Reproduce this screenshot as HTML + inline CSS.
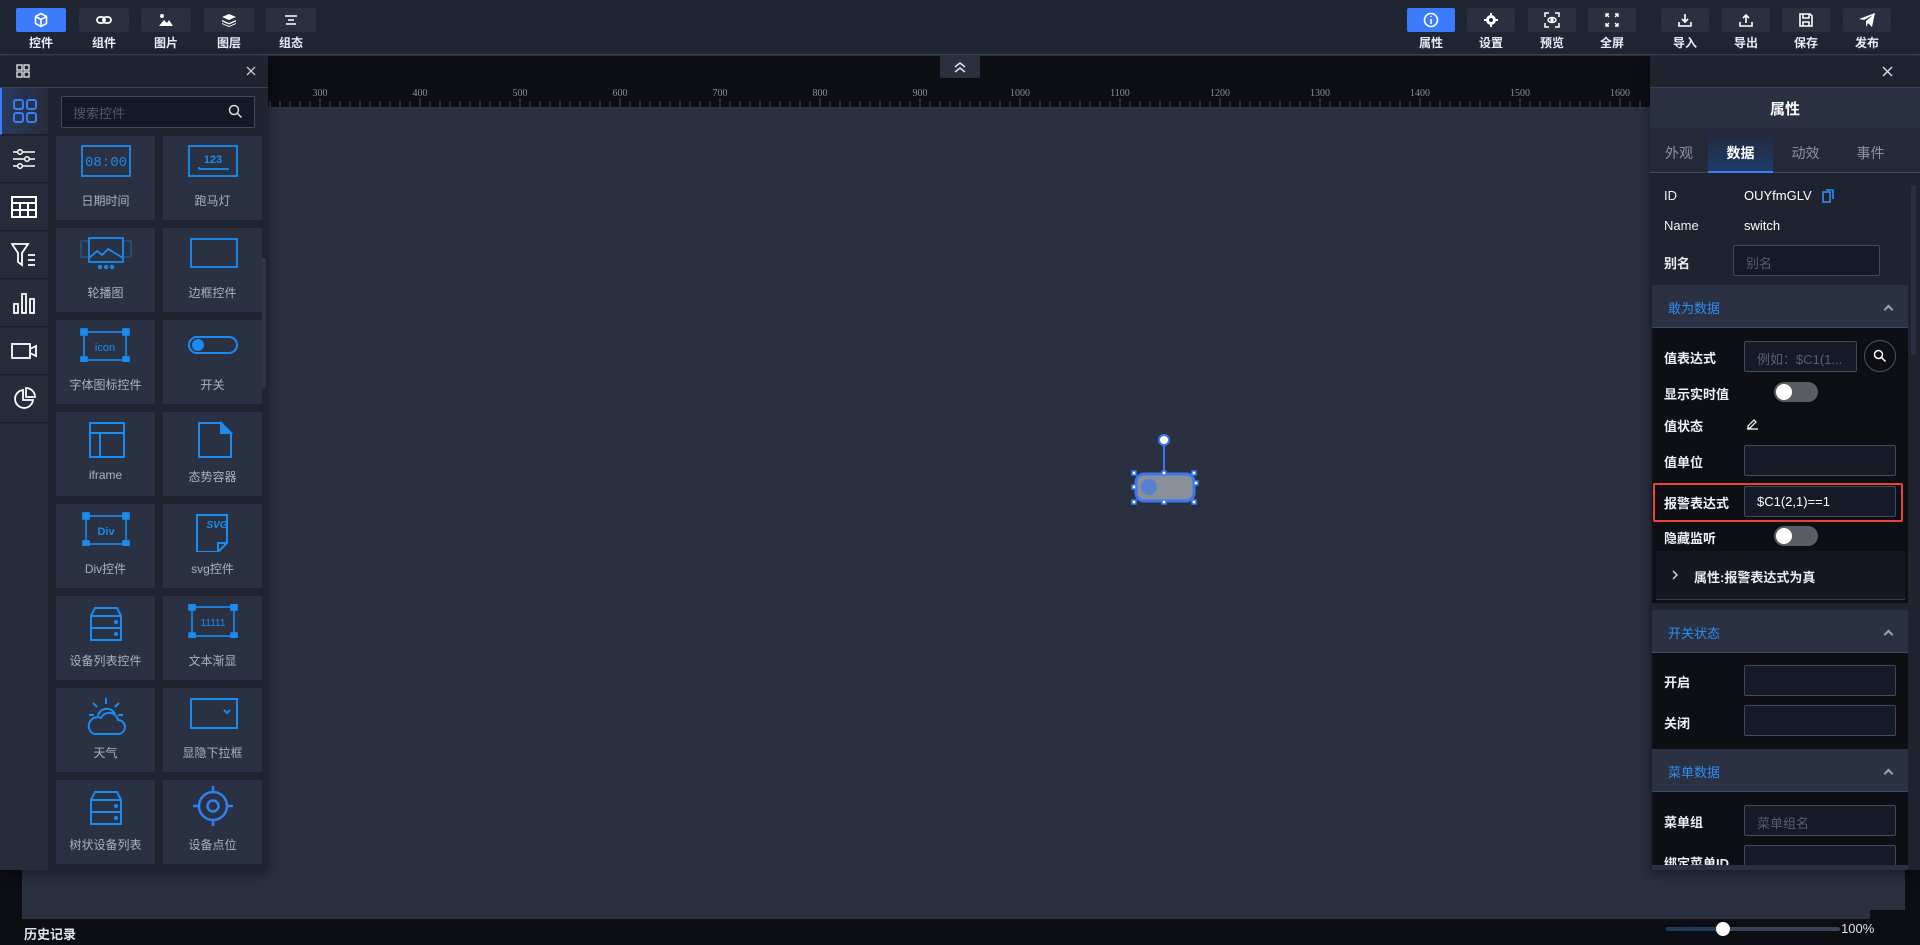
<!DOCTYPE html>
<html><head><meta charset="utf-8"><style>
*{margin:0;padding:0;box-sizing:border-box}
body{width:1920px;height:945px;overflow:hidden;background:#2a3040;font-family:"Liberation Sans","Noto Sans CJK SC",sans-serif;color:#fff;position:relative}
.a{position:absolute}
.top{left:0;top:0;width:1920px;height:55px;background:#1f2533;border-bottom:1px solid #3a4256}
.tb{position:absolute;top:8px;width:50px;height:24px;background:#2a3040;border-radius:2px;display:flex;align-items:center;justify-content:center}
.tb.on{background:#3d7bfd}
.tl{position:absolute;top:34px;width:50px;text-align:center;font-size:12px;font-weight:bold;color:#e8ecf4}
.cell{position:absolute;width:99px;height:84px;background:#2a3142}
.cell .lb{position:absolute;top:56px;width:100%;text-align:center;font-size:12px;color:#a9b2c4}
.cell svg{position:absolute;left:24px;top:8px}
.side{position:absolute;left:0;width:48px;height:47px;background:#262c3a;border-bottom:1px solid #1b1f29;display:flex;align-items:center;justify-content:center}
.lab{position:absolute;left:1664px;font-size:13px;font-weight:bold;color:#eef1f6}
.inp{position:absolute;left:1744px;width:152px;height:31px;background:#151a26;border:1px solid #3e4860;border-radius:2px;font-size:13px;color:#555e72;padding:7px 12px}
.sec{position:absolute;left:1652px;width:256px;background:#2a3142;border-bottom:1px solid #3e4a66}
.sec span{position:absolute;left:16px;font-size:13px;color:#2f8cf0}
.sec i{position:absolute;right:16px;top:50%;width:7px;height:7px;border-left:2px solid #9aa3b5;border-top:2px solid #9aa3b5;transform:rotate(45deg)}
.dark{position:absolute;left:1652px;width:256px;background:#0d0f15}
.tog{position:absolute;left:1774px;width:44px;height:20px;border-radius:10px;background:#5a5d64}
.tog:after{content:"";position:absolute;left:2px;top:2px;width:16px;height:16px;border-radius:50%;background:#fff}
</style></head><body>
<div class="a top"></div>
<div class="tb on" style="left:16px"><svg width="16" height="16" viewBox="0 0 16 16" fill="none" stroke="#fff" stroke-width="1.6"><path d="M8 1.5l5.5 3v7L8 14.5 2.5 11.5v-7z M2.5 4.5L8 7.5l5.5-3 M8 7.5v7"/></svg></div><div class="tl" style="left:16px">控件</div>
<div class="tb" style="left:79px"><svg width="16" height="10" viewBox="0 0 16 10" fill="none" stroke="#fff" stroke-width="1.8"><rect x="1" y="2" width="8" height="6" rx="3"/><rect x="7" y="2" width="8" height="6" rx="3"/></svg></div><div class="tl" style="left:79px">组件</div>
<div class="tb" style="left:141px"><svg width="16" height="14" viewBox="0 0 16 14" fill="#fff"><circle cx="4" cy="3" r="2"/><path d="M1 13l5-6 3 3 2-3 4 6z"/></svg></div><div class="tl" style="left:141px">图片</div>
<div class="tb" style="left:204px"><svg width="16" height="14" viewBox="0 0 16 14" fill="#fff"><path d="M8 1l7 3-7 3-7-3z"/><path d="M1 7l7 3 7-3v1.5l-7 3-7-3z"/><path d="M1 10l7 3 7-3v1l-7 3-7-3z"/></svg></div><div class="tl" style="left:204px">图层</div>
<div class="tb" style="left:266px"><svg width="14" height="10" viewBox="0 0 14 10" stroke="#fff" stroke-width="1.5"><path d="M1 1h12M4 5h6M2 9h10"/></svg></div><div class="tl" style="left:266px">组态</div>

<div class="tb on" style="left:1407px;width:48px"><svg width="16" height="16" viewBox="0 0 16 16" fill="none" stroke="#fff" stroke-width="1.6"><circle cx="8" cy="8" r="6.5"/><path d="M8 7v5M8 4v1" /></svg></div><div class="tl" style="left:1406px">属性</div>
<div class="tb" style="left:1467px;width:48px"><svg width="14" height="14" viewBox="0 0 14 14" fill="#fff"><circle cx="7" cy="7" r="5"/><circle cx="7" cy="7" r="2" fill="#2a3040"/><path d="M6 0h2v3H6zM6 11h2v3H6zM0 6h3v2H0zM11 6h3v2h-3z"/></svg></div><div class="tl" style="left:1466px">设置</div>
<div class="tb" style="left:1528px;width:48px"><svg width="16" height="16" viewBox="0 0 16 16" fill="none" stroke="#fff" stroke-width="1.5"><path d="M1 5V1h4M11 1h4v4M15 11v4h-4M5 15H1v-4"/><ellipse cx="8" cy="8" rx="4" ry="2.5"/><circle cx="8" cy="8" r="1" fill="#fff"/></svg></div><div class="tl" style="left:1527px">预览</div>
<div class="tb" style="left:1588px;width:48px"><svg width="14" height="14" viewBox="0 0 14 14" fill="none" stroke="#fff" stroke-width="1.4"><path d="M1 4V1h3M1 1l3 3M10 1h3v3M13 1l-3 3M13 10v3h-3M13 13l-3-3M4 13H1v-3M1 13l3-3"/></svg></div><div class="tl" style="left:1587px">全屏</div>
<div class="tb" style="left:1661px;width:48px"><svg width="14" height="14" viewBox="0 0 14 14" fill="none" stroke="#fff" stroke-width="1.6"><path d="M7 1v8M4 6l3 3 3-3M1 9v4h12V9"/></svg></div><div class="tl" style="left:1660px">导入</div>
<div class="tb" style="left:1722px;width:48px"><svg width="14" height="14" viewBox="0 0 14 14" fill="none" stroke="#fff" stroke-width="1.6"><path d="M7 10V2M4 5l3-3 3 3M1 9v4h12V9"/></svg></div><div class="tl" style="left:1721px">导出</div>
<div class="tb" style="left:1782px;width:48px"><svg width="14" height="14" viewBox="0 0 14 14" fill="none" stroke="#fff" stroke-width="1.6"><path d="M1 1h10l2 2v10H1z M4 1v4h6V1 M4 13V9h6v4"/></svg></div><div class="tl" style="left:1781px">保存</div>
<div class="tb" style="left:1843px;width:48px"><svg width="18" height="16" viewBox="0 0 18 16" fill="#fff"><path d="M1 7L17 1l-3 14-4-4-2 4V9l7-6-9 5z"/></svg></div><div class="tl" style="left:1842px">发布</div>

<div class="a" style="left:268px;top:56px;width:1382px;height:51px;background:#0c0e14"></div>
<svg class="a" style="left:268px;top:56px" width="1382" height="51">
<g font-family="Liberation Serif" font-size="10" fill="#8a8f99">
<text x="52" y="40" text-anchor="middle">300</text><text x="152" y="40" text-anchor="middle">400</text><text x="252" y="40" text-anchor="middle">500</text><text x="352" y="40" text-anchor="middle">600</text><text x="452" y="40" text-anchor="middle">700</text><text x="552" y="40" text-anchor="middle">800</text><text x="652" y="40" text-anchor="middle">900</text><text x="752" y="40" text-anchor="middle">1000</text><text x="852" y="40" text-anchor="middle">1100</text><text x="952" y="40" text-anchor="middle">1200</text><text x="1052" y="40" text-anchor="middle">1300</text><text x="1152" y="40" text-anchor="middle">1400</text><text x="1252" y="40" text-anchor="middle">1500</text><text x="1352" y="40" text-anchor="middle">1600</text></g>
<g stroke="#4a4f5a" stroke-width="1">
<path d="M2 45v6M12 45v6M22 45v6M32 45v6M42 45v6M52 42v9M62 45v6M72 45v6M82 45v6M92 45v6M102 45v6M112 45v6M122 45v6M132 45v6M142 45v6M152 42v9M162 45v6M172 45v6M182 45v6M192 45v6M202 45v6M212 45v6M222 45v6M232 45v6M242 45v6M252 42v9M262 45v6M272 45v6M282 45v6M292 45v6M302 45v6M312 45v6M322 45v6M332 45v6M342 45v6M352 42v9M362 45v6M372 45v6M382 45v6M392 45v6M402 45v6M412 45v6M422 45v6M432 45v6M442 45v6M452 42v9M462 45v6M472 45v6M482 45v6M492 45v6M502 45v6M512 45v6M522 45v6M532 45v6M542 45v6M552 42v9M562 45v6M572 45v6M582 45v6M592 45v6M602 45v6M612 45v6M622 45v6M632 45v6M642 45v6M652 42v9M662 45v6M672 45v6M682 45v6M692 45v6M702 45v6M712 45v6M722 45v6M732 45v6M742 45v6M752 42v9M762 45v6M772 45v6M782 45v6M792 45v6M802 45v6M812 45v6M822 45v6M832 45v6M842 45v6M852 42v9M862 45v6M872 45v6M882 45v6M892 45v6M902 45v6M912 45v6M922 45v6M932 45v6M942 45v6M952 42v9M962 45v6M972 45v6M982 45v6M992 45v6M1002 45v6M1012 45v6M1022 45v6M1032 45v6M1042 45v6M1052 42v9M1062 45v6M1072 45v6M1082 45v6M1092 45v6M1102 45v6M1112 45v6M1122 45v6M1132 45v6M1142 45v6M1152 42v9M1162 45v6M1172 45v6M1182 45v6M1192 45v6M1202 45v6M1212 45v6M1222 45v6M1232 45v6M1242 45v6M1252 42v9M1262 45v6M1272 45v6M1282 45v6M1292 45v6M1302 45v6M1312 45v6M1322 45v6M1332 45v6M1342 45v6M1352 42v9M1362 45v6M1372 45v6"/></g></svg>
<div class="a" style="left:940px;top:56px;width:40px;height:22px;background:#2a3040;display:flex;align-items:center;justify-content:center"><svg width="14" height="12" viewBox="0 0 14 12" fill="none" stroke="#dde" stroke-width="1.5"><path d="M2 6l5-4 5 4M2 11l5-4 5 4"/></svg></div>

<div class="a" style="left:0;top:870px;width:22px;height:75px;background:#0c0e14"></div>
<div class="a" style="left:1905px;top:870px;width:15px;height:50px;background:#0c0e14"></div>
<div class="a" style="left:1870px;top:910px;width:50px;height:10px;background:#0c0e14"></div>
<div class="a" style="left:0;top:919px;width:1920px;height:26px;background:#0c0e14"></div>
<div class="a" style="left:24px;top:924px;font-size:13px;font-weight:bold;color:#e0e3ea">历史记录</div>
<div class="a" style="left:1666px;top:927px;width:174px;height:4px;background:#3a4458;border-radius:2px"></div>
<div class="a" style="left:1666px;top:927px;width:50px;height:4px;background:#1e3a5e;border-radius:2px"></div>
<div class="a" style="left:1716px;top:922px;width:14px;height:14px;border-radius:50%;background:#fff"></div>
<div class="a" style="left:1841px;top:921px;font-size:13px;color:#e0e3ea">100%</div>

<svg class="a" style="left:1125px;top:430px" width="80" height="80">
<line x1="39" y1="16" x2="39" y2="44" stroke="#3b78f0" stroke-width="2"/>
<circle cx="39" cy="10" r="5" fill="#fff" stroke="#3b78f0" stroke-width="2"/>
<rect x="11" y="44" width="58" height="27" rx="8" fill="#8a9099" stroke="#3b78f0" stroke-width="3"/>
<circle cx="24" cy="57" r="8" fill="#5b7fd0"/>
<g fill="#fff" stroke="#3b78f0" stroke-width="1.5"><rect x="7" y="41" width="4" height="4"/><rect x="37" y="41" width="4" height="4"/><rect x="67" y="41" width="4" height="4"/><rect x="7" y="55" width="4" height="4"/><rect x="69" y="51" width="4" height="4"/><rect x="7" y="70" width="4" height="4"/><rect x="37" y="70" width="4" height="4"/><rect x="67" y="70" width="4" height="4"/></g></svg>

<div class="a" style="left:0;top:56px;width:268px;height:814px;background:#1f2430;box-shadow:0 4px 12px rgba(0,0,0,.4)"></div>
<div class="a" style="left:0;top:87px;width:268px;height:1px;background:#3a4256"></div>
<svg class="a" style="left:16px;top:64px" width="14" height="14" fill="none" stroke="#ddd" stroke-width="1.4"><rect x="1" y="1" width="5" height="5"/><rect x="8" y="1" width="5" height="5"/><rect x="1" y="8" width="5" height="5"/><rect x="8" y="8" width="5" height="5"/></svg>
<svg class="a" style="left:246px;top:66px" width="10" height="10" stroke="#ccc" stroke-width="1.3"><path d="M1 1l8 8M9 1l-8 8"/></svg>
<div class="side" style="top:88px;background:linear-gradient(90deg,#2a3a5c,#262c3a);border-left:2px solid #3d7bfd"><svg width="24" height="24" fill="none" stroke="#3d7bfd" stroke-width="2"><rect x="1" y="1" width="9" height="9" rx="2"/><rect x="14" y="1" width="9" height="9" rx="2"/><rect x="1" y="14" width="9" height="9" rx="2"/><rect x="14" y="14" width="9" height="9" rx="2"/></svg></div>
<div class="side" style="top:136px"><svg width="22" height="20" fill="none" stroke="#fff" stroke-width="1.5"><path d="M0 3h22M0 10h22M0 17h22"/><circle cx="7" cy="3" r="2.3" fill="#262c3a"/><circle cx="14" cy="10" r="2.3" fill="#262c3a"/><circle cx="7" cy="17" r="2.3" fill="#262c3a"/></svg></div>
<div class="side" style="top:184px"><svg width="26" height="22" fill="none" stroke="#fff" stroke-width="2"><rect x="1" y="1" width="24" height="20"/><path d="M1 7h24M1 14h24M9 7v14M17 7v14"/></svg></div>
<div class="side" style="top:232px"><svg width="26" height="24" fill="none" stroke="#fff" stroke-width="1.8"><path d="M1 1h16l-6 9v12l-4-3V10z M17 12h7M17 17h7M17 22h7"/></svg></div>
<div class="side" style="top:280px"><svg width="24" height="22" fill="none" stroke="#fff" stroke-width="1.8"><rect x="2" y="12" width="4" height="9"/><rect x="10" y="2" width="4" height="19"/><rect x="18" y="7" width="4" height="14"/></svg></div>
<div class="side" style="top:328px"><svg width="26" height="18" fill="none" stroke="#fff" stroke-width="1.8"><rect x="1" y="2" width="18" height="14"/><path d="M19 7l6-3v10l-6-3"/></svg></div>
<div class="side" style="top:376px"><svg width="24" height="24" fill="none" stroke="#fff" stroke-width="1.8"><path d="M11 3A9 9 0 1 0 21 13H11z M14 1a9 9 0 0 1 9 9h-9z"/></svg></div>
<div class="side" style="top:424px;height:446px;border:none"></div>
<div class="a" style="left:61px;top:96px;width:194px;height:32px;background:#141925;border:1px solid #3e4860;border-radius:2px"></div>
<div class="a" style="left:73px;top:103px;font-size:13px;color:#4e576a">搜索控件</div>
<svg class="a" style="left:228px;top:104px" width="15" height="15" fill="none" stroke="#ddd" stroke-width="1.5"><circle cx="6" cy="6" r="4.5"/><path d="M9.5 9.5l4 4"/></svg>
<div class="a" style="left:262px;top:258px;width:4px;height:130px;background:#2f3646;border-radius:2px"></div>

<div class="cell" style="left:56px;top:136px"><svg width="52" height="34" fill="none" stroke="#1a8cf0" stroke-width="1.8"><rect x="2" y="2" width="48" height="30"/><text x="26" y="22" text-anchor="middle" font-size="14" fill="#1a8cf0" stroke="none" font-family="Liberation Mono">08:00</text></svg><div class="lb">日期时间</div></div>
<div class="cell" style="left:163px;top:136px"><svg width="52" height="34" fill="none" stroke="#1a8cf0" stroke-width="1.8"><rect x="2" y="2" width="48" height="30"/><text x="26" y="19" text-anchor="middle" font-size="11" font-weight="bold" fill="#1a8cf0" stroke="none">123</text><path d="M12 25h30M12 23v2"/></svg><div class="lb">跑马灯</div></div>
<div class="cell" style="left:56px;top:228px"><svg width="52" height="34" fill="none" stroke="#1a8cf0" stroke-width="1.8"><rect x="1" y="5" width="50" height="16" stroke="#23507a"/><rect x="9" y="2" width="34" height="24" fill="#2a3142"/><path d="M9 22l8-7 5 4 6-6 15 9"/><circle cx="20" cy="31" r="1.3"/><circle cx="26" cy="31" r="1.3"/><circle cx="32" cy="31" r="1.3"/></svg><div class="lb">轮播图</div></div>
<div class="cell" style="left:163px;top:228px"><svg width="52" height="34" fill="none" stroke="#1a8cf0" stroke-width="1.8"><rect x="4" y="3" width="46" height="28"/></svg><div class="lb">边框控件</div></div>
<div class="cell" style="left:56px;top:320px"><svg width="52" height="34" fill="none" stroke="#1a8cf0" stroke-width="1.6"><rect x="4" y="4" width="42" height="28"/><g fill="#1a8cf0"><rect x="1" y="1" width="6" height="6"/><rect x="43" y="1" width="6" height="6"/><rect x="1" y="29" width="6" height="6"/><rect x="43" y="29" width="6" height="6"/></g><text x="25" y="23" text-anchor="middle" font-size="11" fill="#1a8cf0" stroke="none">icon</text></svg><div class="lb">字体图标控件</div></div>
<div class="cell" style="left:163px;top:320px"><svg width="52" height="34" fill="none" stroke="#1a8cf0" stroke-width="2"><rect x="2" y="9" width="48" height="16" rx="8"/><circle cx="11" cy="17" r="5" fill="#1a8cf0"/></svg><div class="lb">开关</div></div>
<div class="cell" style="left:56px;top:412px"><svg width="52" height="38" fill="none" stroke="#1a8cf0" stroke-width="2"><rect x="10" y="3" width="34" height="34"/><path d="M10 13h34M20 13v24"/></svg><div class="lb">iframe</div></div>
<div class="cell" style="left:163px;top:412px"><svg width="52" height="38" fill="none" stroke="#1a8cf0" stroke-width="2"><path d="M12 3h22l10 10v24H12z"/><path d="M34 3l10 10H34z" fill="#1a8cf0"/></svg><div class="lb">态势容器</div></div>
<div class="cell" style="left:56px;top:504px"><svg width="52" height="34" fill="none" stroke="#1a8cf0" stroke-width="1.6"><rect x="6" y="4" width="40" height="28"/><g fill="#1a8cf0"><rect x="3" y="1" width="6" height="6"/><rect x="43" y="1" width="6" height="6"/><rect x="3" y="29" width="6" height="6"/><rect x="43" y="29" width="6" height="6"/></g><text x="26" y="23" text-anchor="middle" font-size="11" font-weight="bold" fill="#1a8cf0" stroke="none">Div</text></svg><div class="lb">Div控件</div></div>
<div class="cell" style="left:163px;top:504px"><svg width="52" height="40" fill="none" stroke="#1a8cf0" stroke-width="2"><path d="M10 3h30v28l-9 9H10z M31 40v-9h9"/><text x="30" y="16" text-anchor="middle" font-size="10" font-style="italic" font-weight="bold" fill="#1a8cf0" stroke="none">SVG</text></svg><div class="lb">svg控件</div></div>
<div class="cell" style="left:56px;top:596px"><svg width="52" height="38" fill="none" stroke="#1a8cf0" stroke-width="2"><path d="M11 12l4-8h22l4 8v24H11zM11 12h30M11 24h30"/><circle cx="36" cy="18" r="1" fill="#1a8cf0"/><circle cx="36" cy="30" r="1" fill="#1a8cf0"/></svg><div class="lb">设备列表控件</div></div>
<div class="cell" style="left:163px;top:596px"><svg width="52" height="34" fill="none" stroke="#1a8cf0" stroke-width="1.6"><rect x="5" y="3" width="42" height="29"/><g fill="#1a8cf0"><rect x="2" y="0" width="6" height="6"/><rect x="44" y="0" width="6" height="6"/><rect x="2" y="29" width="6" height="6"/><rect x="44" y="29" width="6" height="6"/></g><text x="26" y="22" text-anchor="middle" font-size="10" fill="#1a8cf0" stroke="none">11111</text></svg><div class="lb">文本渐显</div></div>
<div class="cell" style="left:56px;top:688px"><svg width="52" height="40" fill="none" stroke="#1a8cf0" stroke-width="2"><path d="M26 2v6M13 7l4 4M39 7l-4 4M9 19h5M38 19h5"/><path d="M18 20a9 9 0 0 1 17-2"/><path d="M14 38h24a7 7 0 0 0 0-14 9 9 0 0 0-17-2 8 8 0 0 0-7 16z"/></svg><div class="lb">天气</div></div>
<div class="cell" style="left:163px;top:688px"><svg width="52" height="34" fill="none" stroke="#1a8cf0" stroke-width="2"><rect x="4" y="3" width="46" height="29"/><path d="M37 14l3 3 3-3"/></svg><div class="lb">显隐下拉框</div></div>
<div class="cell" style="left:56px;top:780px"><svg width="52" height="38" fill="none" stroke="#1a8cf0" stroke-width="2"><path d="M11 12l4-8h22l4 8v24H11zM11 12h30M11 24h30"/><circle cx="36" cy="18" r="1" fill="#1a8cf0"/><circle cx="36" cy="30" r="1" fill="#1a8cf0"/></svg><div class="lb">树状设备列表</div></div>
<div class="cell" style="left:163px;top:780px"><svg width="52" height="44" fill="none" stroke="#2f80f0" stroke-width="2.5" style="top:4px"><circle cx="26" cy="22" r="14"/><circle cx="26" cy="22" r="5.5"/><path d="M26 2v6M26 36v6M6 22h6M40 22h6"/></svg><div class="lb">设备点位</div></div>

<div class="a" style="left:1650px;top:56px;width:270px;height:814px;background:#1f2330;box-shadow:0 4px 12px rgba(0,0,0,.4)"></div>
<svg class="a" style="left:1882px;top:66px" width="11" height="11" stroke="#ddd" stroke-width="1.4"><path d="M1 1l9 9M10 1l-9 9"/></svg>
<div class="a" style="left:1650px;top:87px;width:270px;height:41px;background:#2a3142;border-top:1px solid #3a4256"></div>
<div class="a" style="left:1650px;top:98px;width:270px;text-align:center;font-size:15px;font-weight:bold">属性</div>
<div class="a" style="left:1650px;top:128px;width:270px;height:45px;background:#242a38;border-bottom:1px solid #3a4a66"></div>
<div class="a" style="left:1708px;top:132px;width:65px;height:41px;background:linear-gradient(#232a3a,#1f3a6a);border-bottom:2px solid #3d7bfd"></div>
<div class="a" style="left:1650px;top:143px;width:58px;text-align:center;font-size:14px;color:#8c93a2">外观</div>
<div class="a" style="left:1708px;top:143px;width:65px;text-align:center;font-size:14px;font-weight:bold">数据</div>
<div class="a" style="left:1773px;top:143px;width:65px;text-align:center;font-size:14px;color:#8c93a2">动效</div>
<div class="a" style="left:1838px;top:143px;width:65px;text-align:center;font-size:14px;color:#8c93a2">事件</div>
<div class="a" style="left:1911px;top:185px;width:5px;height:170px;background:#2a3040;border-radius:2px"></div>

<div class="lab" style="top:188px;font-weight:normal">ID</div><div class="a" style="left:1744px;top:188px;font-size:13px">OUYfmGLV</div>
<svg class="a" style="left:1822px;top:189px" width="12" height="14" fill="none" stroke="#2f8cf0" stroke-width="1.6"><rect x="1" y="3" width="7" height="10"/><path d="M4 1h7v9"/></svg>
<div class="lab" style="top:218px;font-weight:normal">Name</div><div class="a" style="left:1744px;top:218px;font-size:13px">switch</div>
<div class="lab" style="top:253px">别名</div><div class="inp" style="left:1733px;top:245px;width:147px">别名</div>

<div class="sec" style="top:285px;height:43px"><span style="top:13px">敢为数据</span><i></i></div>
<div class="dark" style="top:328px;height:275px"></div>
<div class="lab" style="top:348px">值表达式</div><div class="inp" style="top:341px;width:113px">例如：$C1(1...</div>
<div class="a" style="left:1864px;top:340px;width:32px;height:32px;border-radius:50%;border:1px solid #4a5468"></div>
<svg class="a" style="left:1873px;top:349px" width="14" height="14" fill="none" stroke="#fff" stroke-width="1.5"><circle cx="5.5" cy="5.5" r="4"/><path d="M8.5 8.5l4 4"/></svg>
<div class="lab" style="top:384px">显示实时值</div><div class="tog" style="top:382px"></div>
<div class="lab" style="top:416px">值状态</div>
<svg class="a" style="left:1746px;top:417px" width="13" height="13" fill="none" stroke="#fff" stroke-width="1.2"><path d="M2 9l6-6 2 2-6 6H2z M1 12h11"/></svg>
<div class="lab" style="top:452px">值单位</div><div class="inp" style="top:445px"></div>
<div class="a" style="left:1653px;top:483px;width:250px;height:39px;border:2px solid #e8453a;border-radius:2px"></div>
<div class="lab" style="top:493px">报警表达式</div><div class="inp" style="top:486px;color:#fff">$C1(2,1)==1</div>
<div class="lab" style="top:528px">隐藏监听</div><div class="tog" style="top:526px"></div>
<div class="a" style="left:1656px;top:551px;width:249px;height:49px;background:#151821;border-bottom:1px solid #333a4a"></div>
<svg class="a" style="left:1671px;top:570px" width="8" height="10" fill="none" stroke="#ddd" stroke-width="1.4"><path d="M2 1l4 4-4 4"/></svg>
<div class="a" style="left:1694px;top:567px;font-size:13px;font-weight:bold;color:#e8ebf0">属性:报警表达式为真</div>

<div class="sec" style="top:610px;height:43px"><span style="top:13px">开关状态</span><i></i></div>
<div class="dark" style="top:653px;height:96px"></div>
<div class="lab" style="top:672px">开启</div><div class="inp" style="top:665px"></div>
<div class="lab" style="top:713px">关闭</div><div class="inp" style="top:705px"></div>
<div class="sec" style="top:749px;height:43px"><span style="top:13px">菜单数据</span><i></i></div>
<div class="dark" style="top:792px;height:73px;overflow:hidden"><div class="lab" style="left:12px;top:20px">菜单组</div><div class="inp" style="left:92px;top:13px">菜单组名</div><div class="lab" style="left:12px;top:61px">绑定菜单ID</div><div class="inp" style="left:92px;top:53px"></div></div>
<div class="a" style="left:1652px;top:865px;width:256px;height:5px;background:#2a3142"></div>
</body></html>
